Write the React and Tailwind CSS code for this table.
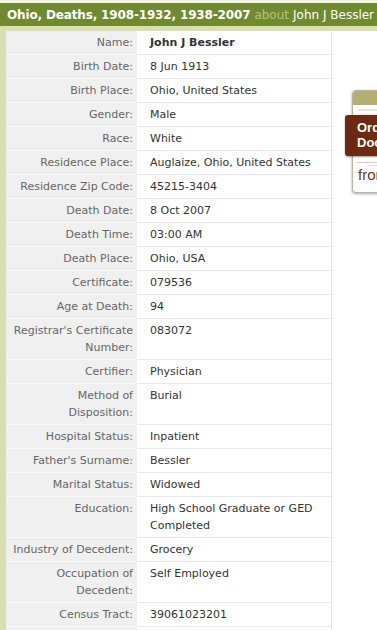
import React from 'react';

const rows = [
  { label: 'Name:', value: 'John J Bessler', bold: true },
  { label: 'Birth Date:', value: '8 Jun 1913' },
  { label: 'Birth Place:', value: 'Ohio, United States' },
  { label: 'Gender:', value: 'Male' },
  { label: 'Race:', value: 'White' },
  { label: 'Residence Place:', value: 'Auglaize, Ohio, United States' },
  { label: 'Residence Zip Code:', value: '45215-3404' },
  { label: 'Death Date:', value: '8 Oct 2007' },
  { label: 'Death Time:', value: '03:00 AM' },
  { label: 'Death Place:', value: 'Ohio, USA' },
  { label: 'Certificate:', value: '079536' },
  { label: 'Age at Death:', value: '94' },
  { label: "Registrar's Certificate\nNumber:", value: '083072' },
  { label: 'Certifier:', value: 'Physician' },
  { label: 'Method of\nDisposition:', value: 'Burial' },
  { label: 'Hospital Status:', value: 'Inpatient' },
  { label: "Father's Surname:", value: 'Bessler' },
  { label: 'Marital Status:', value: 'Widowed' },
  { label: 'Education:', value: 'High School Graduate or GED\nCompleted' },
  { label: 'Industry of Decedent:', value: 'Grocery' },
  { label: 'Occupation of\nDecedent:', value: 'Self Employed' },
  { label: 'Census Tract:', value: '39061023201' },
  { label: '\u00a0', value: '\u00a0' },
];

const OrderAd = () => (
  <div className="relative ml-[20px] mt-[59px] w-[130px] shrink-0">
    <div className="h-[103px] rounded-[4px] border border-[#b9b4a0] bg-white shadow-[0_1px_3px_rgba(0,0,0,0.35)] overflow-hidden">
      <div className="h-[14px] bg-[#b7af72]" />
      <div className="flex flex-col gap-[3px] px-[6px] pt-[4px]">
        <div className="h-[2px] w-[20px] bg-[#e2e2e2]" />
        <div className="h-[2px] w-[60px] bg-[#eeeeee]" />
      </div>
      <div className="mt-[46px] flex flex-col gap-[2px] px-[4px]">
        <div className="h-[1px] w-full bg-[#cfcfcf]" />
        <div className="ml-[10px] h-[1px] w-[14px] bg-[#dcdcdc]" />
      </div>
      <div className="pl-[5px] text-[15px] leading-[18px] text-[#6b3a1e] font-['Liberation_Sans',sans-serif]">
        from
      </div>
    </div>
    <div className="absolute left-[-7px] top-[25px] h-[41px] w-[140px] rounded-[3px] bg-[#6d2a10] pl-[12px] pt-[5px] text-[13px] font-bold leading-[15px] text-white font-['Liberation_Sans',sans-serif] shadow-[0_1px_2px_rgba(0,0,0,0.4)]">
      <div>Order</div>
      <div>Documents</div>
    </div>
  </div>
);

const App = () => {
  return (
    <div className="w-[377px] h-[630px] overflow-hidden bg-white font-['DejaVu_Sans',Verdana,sans-serif]">
      <div className="h-[3px] bg-[#f3f4ea]" />
      <div className="flex h-[23px] items-center whitespace-nowrap bg-[#6f8a2f] px-[7px] text-[12px] text-white">
        <span className="font-bold tracking-[-0.15px]">Ohio, Deaths, 1908-1932, 1938-2007</span>
        <span className="ml-[4px] text-[#b4c47c]">about</span>
        <span className="ml-[4px]">John J Bessler</span>
      </div>
      <div className="h-[5px] bg-[#d8e0ae]" />
      <div className="flex">
        <div className="border-l-[6px] border-[#d8e0ae]">
          <div className="w-[326px] border-r border-[#e6e6e6]">
            {rows.map((row, i) => (
              <div key={i} className="flex text-[11px] leading-[17px]">
                <div className="w-[131px] shrink-0 whitespace-pre-line border-b border-[#fbfbfb] bg-[#f0f0f0] pb-[3px] pl-[4px] pr-[4px] pt-[3px] text-right text-[#666666]">
                  {row.label}
                </div>
                <div className={`flex-1 whitespace-pre-line border-b border-[#e8e8e8] pb-[3px] pl-[13px] pr-[3px] pt-[3px] text-[#333333] ${row.bold ? 'font-bold' : ''}`}>
                  {row.value}
                </div>
              </div>
            ))}
          </div>
        </div>
        <OrderAd />
      </div>
    </div>
  );
};

export default App;
